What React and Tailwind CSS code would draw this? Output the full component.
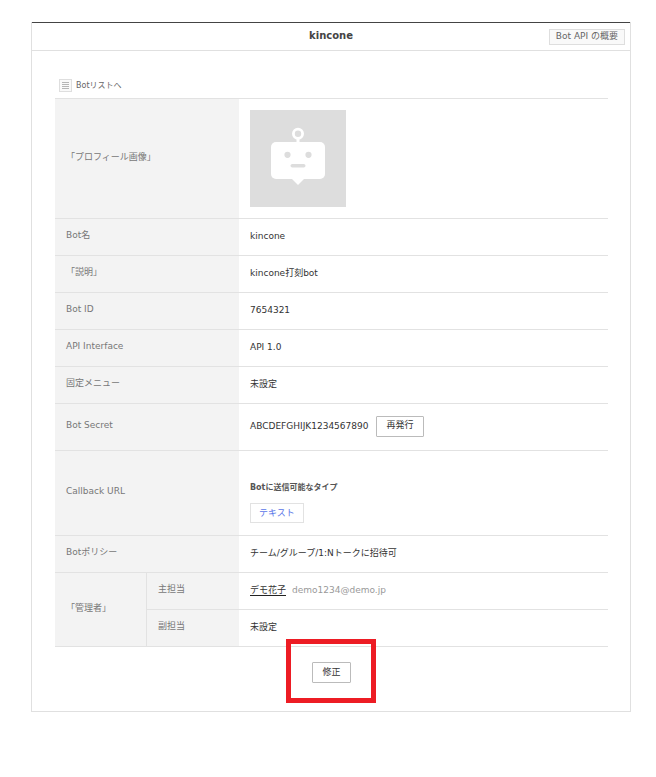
import React from "react";

const thClass =
  "border-b border-[#e2e2e2] bg-[#f3f3f3] px-[11px] pb-1 text-left font-normal text-[#777]";
const tdClass = "border-b border-[#e2e2e2] px-[11px] pb-[2px] text-[#333]";

const basicRows = [
  { label: "Bot名", value: "kincone" },
  { label: "「説明」", value: "kincone打刻bot" },
  { label: "Bot ID", value: "7654321" },
  { label: "API Interface", value: "API 1.0" },
  { label: "固定メニュー", value: "未設定" },
];

const ListIcon = () => (
  <svg width="13" height="13" viewBox="0 0 13 13" aria-hidden="true">
    <rect x="0.5" y="0.5" width="12" height="12" fill="#f9f9f9" stroke="#dedede" />
    <path d="M3 3.5h7M3 5.5h7M3 7.5h7M3 9.5h7" stroke="#b5b5b5" />
  </svg>
);

const BotAvatar = () => (
  <svg width="96" height="97" viewBox="0 0 96 97" role="img" aria-label="kincone">
    <rect width="96" height="97" fill="#ddd" />
    <circle cx="48" cy="23.7" r="4.6" fill="none" stroke="#fff" strokeWidth="2.8" />
    <path d="M48 28v6" stroke="#fff" strokeWidth="3" />
    <rect x="21" y="32" width="54" height="37" rx="5" fill="#fff" />
    <path d="M42 69h12l-6 6z" fill="#fff" />
    <circle cx="37.5" cy="44.8" r="3.1" fill="#ddd" />
    <circle cx="58.5" cy="44.8" r="3.1" fill="#ddd" />
    <rect x="40.5" y="54" width="15" height="3.6" rx="1.8" fill="#ddd" />
  </svg>
);

const SmallButton = ({ children }) => (
  <button
    type="button"
    className="h-[21px] rounded-[1px] border border-[#bbb] bg-white px-[9px] pb-[2px] text-[9px] leading-3 text-[#333]"
  >
    {children}
  </button>
);

const App = () => {
  return (
    <main
      lang="ja"
      className="mt-[22px] mr-[25px] mb-16 ml-[31px] border-x border-b border-[#e0e0e0] bg-white font-['DejaVu_Sans','Noto_Sans_CJK_JP',sans-serif] text-[9px] leading-3"
    >
      <header className="grid h-[29px] grid-cols-[1fr_auto_1fr] items-center border-t border-b border-t-[#444] border-b-[#e0e0e0]">
        <h1 className="col-start-2 pb-[2px] text-[10px] font-bold text-[#444]">kincone</h1>
        <a
          href="#api"
          className="mr-[5px] justify-self-end border border-[#dedede] bg-[#f9f9f9] px-[6px] pb-[2px] text-[#666]"
        >
          Bot API の概要
        </a>
      </header>

      <div className="pt-7 pr-[22px] pb-7 pl-[23px]">
        <a href="#list" className="mb-[6px] ml-1 flex w-fit items-center gap-1 text-[8px] text-[#666]">
          <ListIcon />
          Botリストへ
        </a>

        <table className="w-full table-fixed border-separate border-spacing-0 border-t border-[#e2e2e2]">
          <colgroup>
            <col className="w-[92px]" />
            <col className="w-[92px]" />
            <col />
          </colgroup>
          <tbody>
            <tr>
              <th scope="row" colSpan={2} className={thClass}>
                「プロフィール画像」
              </th>
              <td className="border-b border-[#e2e2e2] p-[11px]">
                <BotAvatar />
              </td>
            </tr>
            {basicRows.map((row) => (
              <tr key={row.label} className="h-[37px]">
                <th scope="row" colSpan={2} className={thClass}>
                  {row.label}
                </th>
                <td className={tdClass}>{row.value}</td>
              </tr>
            ))}
            <tr className="h-[47px]">
              <th scope="row" colSpan={2} className={thClass}>
                Bot Secret
              </th>
              <td className={tdClass}>
                <div className="flex items-center gap-2">
                  <span>ABCDEFGHIJK1234567890</span>
                  <SmallButton>再発行</SmallButton>
                </div>
              </td>
            </tr>
            <tr className="h-[85px]">
              <th scope="row" colSpan={2} className={thClass}>
                Callback URL
              </th>
              <td className="border-b border-[#e2e2e2] px-[11px] pb-3 align-bottom">
                <h2 className="mb-[9px] text-[8px] font-bold text-[#555]">Botに送信可能なタイプ</h2>
                <span className="flex h-5 w-fit items-center border border-[#e2e2e2] px-2 text-[#5b76e8]">
                  テキスト
                </span>
              </td>
            </tr>
            <tr className="h-[37px]">
              <th scope="row" colSpan={2} className={thClass}>
                Botポリシー
              </th>
              <td className={tdClass}>チーム/グループ/1:Nトークに招待可</td>
            </tr>
            <tr className="h-[37px]">
              <th scope="rowgroup" rowSpan={2} className={`${thClass} border-r`}>
                「管理者」
              </th>
              <th scope="row" className={thClass}>
                主担当
              </th>
              <td className={tdClass}>
                <a href="#manager" className="border-b border-[#222]">
                  デモ花子
                </a>
                <span className="ml-[6px] text-[#999]">demo1234@demo.jp</span>
              </td>
            </tr>
            <tr className="h-[37px]">
              <th scope="row" className={thClass}>
                副担当
              </th>
              <td className={tdClass}>未設定</td>
            </tr>
          </tbody>
        </table>

        <div className="flex justify-center pt-[15px]">
          <div className="relative flex">
            <SmallButton>修正</SmallButton>
            <div className="pointer-events-none absolute -top-[23px] -right-[25px] -bottom-5 -left-[26px] border-5 border-[#ed1c24]" />
          </div>
        </div>
      </div>
    </main>
  );
};

export default App;
